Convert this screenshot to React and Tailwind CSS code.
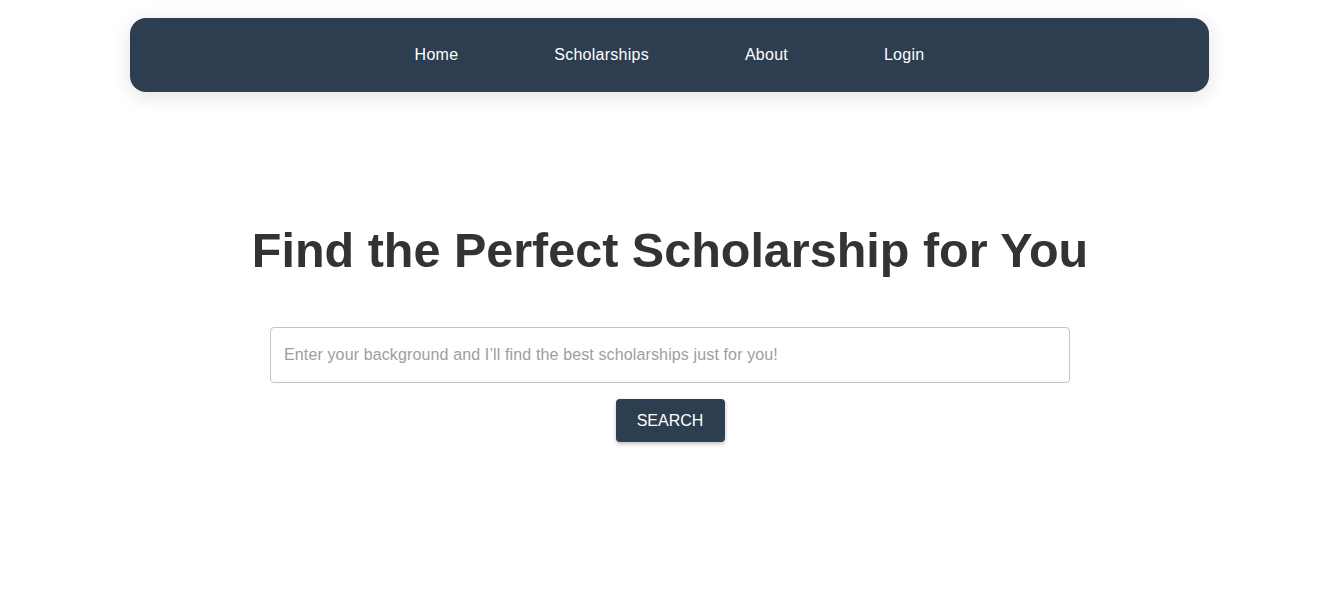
export default function App() {
  return (
    <div className="min-h-[590px] bg-white" style={{ fontFamily: '"Liberation Sans", Arial, sans-serif' }}>
      <div className="pt-[18px] pl-[130px] pr-[131px]">
        <nav className="h-[74px] rounded-[16px] bg-[#2c3e50] shadow-[0_4px_20px_rgba(0,0,0,0.12)] flex items-center justify-center gap-[96px] text-white text-[16px] tracking-[0.25px]">
          <a href="#" className="text-white">Home</a>
          <a href="#" className="text-white">Scholarships</a>
          <a href="#" className="text-white">About</a>
          <a href="#" className="text-white">Login</a>
        </nav>
      </div>
      <main className="flex flex-col items-center pt-[130px]">
        <h1 className="text-[48.5px] leading-[56px] font-bold text-[#333333]">Find the Perfect Scholarship for You</h1>
        <input
          type="text"
          placeholder="Enter your background and I’ll find the best scholarships just for you!"
          className="mt-[49px] w-[800px] h-[56px] border border-[#c4c4c4] rounded-[4px] px-[13px] text-[16px] tracking-[0.13px] placeholder:text-[#9e9e9e] outline-none"
        />
        <button className="mt-[16px] h-[43px] w-[109px] rounded-[4px] bg-[#2c3e50] text-white text-[16px] shadow-[0_2px_4px_rgba(0,0,0,0.25)]">SEARCH</button>
      </main>
    </div>
  );
}
